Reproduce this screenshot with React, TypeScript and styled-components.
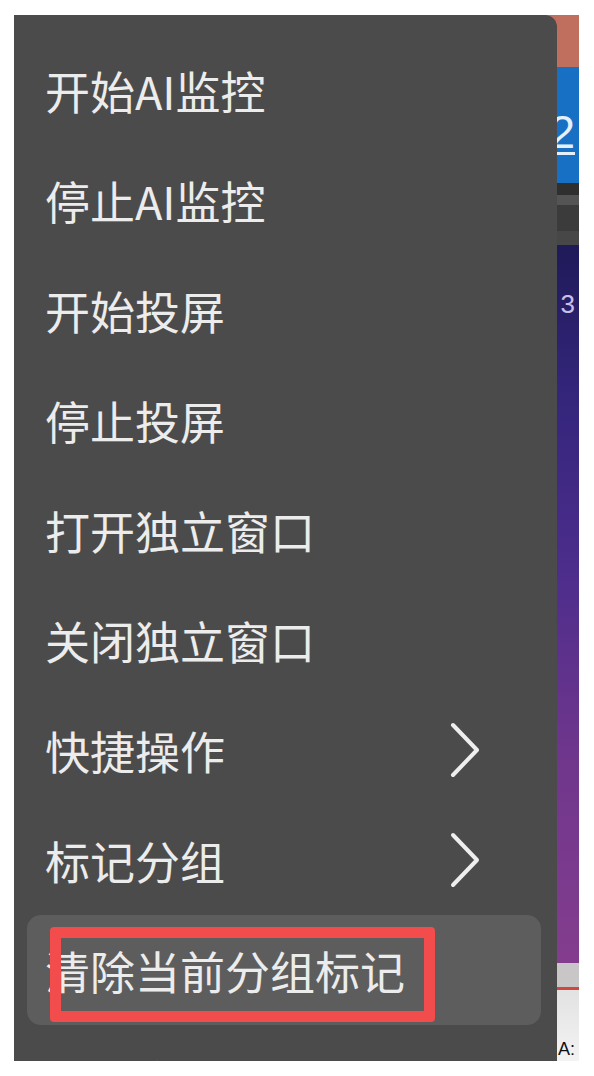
import styled, { createGlobalStyle } from "styled-components";

const GlobalStyle = createGlobalStyle`
  html, body {
    margin: 0;
    padding: 0;
    background: #ffffff;
  }
  body {
    font-family: "Noto Sans CJK SC", "Noto Sans", sans-serif;
  }
`;

const Screen = styled.div`
  position: relative;
  width: 565px;
  height: 1046px;
  margin: 15px 0 0 14px;
  overflow: hidden;
`;

// the app window behind the context menu, only its right edge shows
const Backdrop = styled.div`
  display: flex;
  flex-direction: column;
  height: 100%;
`;

const Band = styled.div<{ $h: number; $bg: string }>`
  height: ${(p) => p.$h}px;
  flex-shrink: 0;
  background: ${(p) => p.$bg};
  display: flex;
  justify-content: flex-end;
  align-items: flex-start;
`;

const BandText = styled.span<{ $size: number; $top: number; $color: string }>`
  margin-top: ${(p) => p.$top}px;
  padding-right: 4px;
  font-family: "Liberation Sans", sans-serif;
  font-size: ${(p) => p.$size}px;
  line-height: 1;
  color: ${(p) => p.$color};
`;

const Underlined = styled(BandText)`
  text-decoration: underline;
  text-underline-offset: 4px;
  text-decoration-thickness: 3px;
`;

const Menu = styled.div`
  position: absolute;
  top: 0;
  left: 0;
  width: 543px;
  height: 100%;
  background: #4b4b4b;
  border-top-right-radius: 12px;
  padding-top: 20px;
  box-sizing: border-box;
  display: flex;
  flex-direction: column;
`;

const Item = styled.div<{ $active?: boolean }>`
  position: relative;
  flex-shrink: 0;
  height: 110px;
  margin: 0 16px 0 13px;
  padding: 0 61px 0 18px;
  display: flex;
  align-items: center;
  justify-content: space-between;
  border-radius: 14px;
  background: ${(p) => (p.$active ? "#5d5d5d" : "transparent")};
`;

const Label = styled.span`
  font-size: 45px;
  line-height: 1;
  color: #ececec;
  white-space: nowrap;
`;

const Mark = styled.div`
  position: absolute;
  left: 23px;
  top: 12px;
  width: 385px;
  height: 95px;
  box-sizing: border-box;
  border: 11px solid #f24c4c;
  border-radius: 4px;
`;

const Chevron = () => (
  <svg width="30" height="56" viewBox="0 0 30 56" fill="none">
    <polyline
      points="3,3 27,28 3,53"
      stroke="#eeeeee"
      strokeWidth="4"
      strokeLinecap="round"
      strokeLinejoin="round"
    />
  </svg>
);

const items = [
  { label: "开始AI监控" },
  { label: "停止AI监控" },
  { label: "开始投屏" },
  { label: "停止投屏" },
  { label: "打开独立窗口" },
  { label: "关闭独立窗口" },
  { label: "快捷操作", sub: true },
  { label: "标记分组", sub: true },
  { label: "清除当前分组标记", active: true },
  { label: "清除全部分组标记" },
];

export default function App() {
  return (
    <>
      <GlobalStyle />
      <Screen>
        <Backdrop>
          <Band $h={52} $bg="#c06e5e" />
          <Band $h={116} $bg="#1770c4">
            <Underlined $size={46} $top={42} $color="#e6f0fa">
              2
            </Underlined>
          </Band>
          <Band $h={12} $bg="#2f2f2f" />
          <Band $h={10} $bg="#545454" />
          <Band $h={26} $bg="#3b3b3b" />
          <Band $h={14} $bg="#474747" />
          <Band
            $h={718}
            $bg="linear-gradient(#1f1a58, #33257a 20%, #4c2d8c 45%, #6e368c 70%, #843d8e)"
          >
            <BandText $size={26} $top={46} $color="#c8c0e8">
              3
            </BandText>
          </Band>
          <Band $h={24} $bg="#c9c6c8" />
          <Band $h={3} $bg="#d0453d" />
          <Band $h={75} $bg="linear-gradient(#e2e2e2, #f4f4f4)">
            <BandText $size={18} $top={50} $color="#111">
              A:
            </BandText>
          </Band>
        </Backdrop>
        <Menu>
          {items.map((it) => (
            <Item key={it.label} $active={it.active}>
              <Label>{it.label}</Label>
              {it.sub && <Chevron />}
              {it.active && <Mark />}
            </Item>
          ))}
        </Menu>
      </Screen>
    </>
  );
}
